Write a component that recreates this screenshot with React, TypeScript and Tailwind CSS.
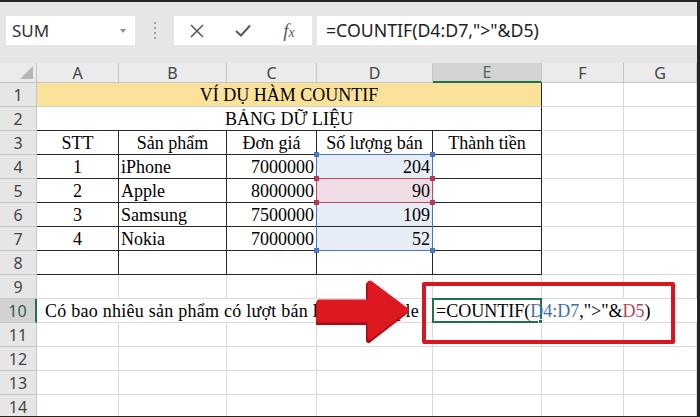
import React from 'react';

const SERIF = "font-['Liberation_Serif','Times_New_Roman',serif] text-[18px] text-black leading-none";
const SANS = "font-['Noto_Sans','Open_Sans',sans-serif]";

const GC = 'border-r border-b border-[#dadada] bg-white';
const KC = 'border-r border-b border-[#262626] bg-white';
const RH = "border-r border-b border-[#c6c6c6] bg-[#e6e6e6] flex items-center justify-center text-[16px] text-[#444] font-['Noto_Sans','Open_Sans',sans-serif]";

function RowHead({ n, active = false }: { n: number; active?: boolean }) {
  if (active) {
    return (
      <div className="border-b border-[#c6c6c6] border-r-2 border-r-[#217346] bg-[#d2d2d2] flex items-center justify-center text-[16px] text-[#2f5e40] font-['Noto_Sans','Open_Sans',sans-serif]">
        {n}
      </div>
    );
  }
  return <div className={RH}>{n}</div>;
}

function Toolbar() {
  return (
    <div className="h-[61px] shrink-0 bg-[#e6e6e6] flex items-start pt-[14px] pl-[6px]">
      <div className="w-[129px] h-[29px] bg-white flex items-center justify-between pl-[6px] pr-[9px]">
        <span className={`${SANS} text-[17px] text-[#333]`}>SUM</span>
        <svg width="6" height="4" viewBox="0 0 6 4">
          <path d="M0 0 L6 0 L3 4 Z" fill="#8a8a8a" />
        </svg>
      </div>
      <div className="w-[39px] h-[29px] flex flex-col items-center justify-center gap-[3px]">
        <div className="w-[2px] h-[2px] bg-[#a0a0a0]" />
        <div className="w-[2px] h-[2px] bg-[#a0a0a0]" />
        <div className="w-[2px] h-[2px] bg-[#a0a0a0]" />
        <div className="w-[2px] h-[2px] bg-[#a0a0a0]" />
      </div>
      <div className="w-[138px] h-[29px] bg-white flex items-center">
        <div className="w-[46px] flex justify-center">
          <svg width="14" height="14" viewBox="0 0 14 14">
            <path d="M1 1 L13 13 M13 1 L1 13" stroke="#5a5a5a" strokeWidth="1.6" fill="none" />
          </svg>
        </div>
        <div className="w-[46px] flex justify-center">
          <svg width="16" height="13" viewBox="0 0 16 13">
            <path d="M1 7 L6 11.5 L15 1.5" stroke="#5a5a5a" strokeWidth="2" fill="none" />
          </svg>
        </div>
        <div className="w-[46px] flex justify-center">
          <span className="font-['Liberation_Serif',serif] italic text-[19px] text-[#5a5a5a] leading-none">
            f<span className="text-[14px]">x</span>
          </span>
        </div>
      </div>
      <div className="ml-[5px] flex-1 h-[29px] bg-white flex items-center pl-[9px]">
        <span className={`${SANS} text-[17.7px] text-[#222]`}>=COUNTIF(D4:D7,"&gt;"&amp;D5)</span>
      </div>
    </div>
  );
}

function ColHead({ l, active = false }: { l: string; active?: boolean }) {
  if (active) {
    return (
      <div className="border-r border-[#c6c6c6] border-b-2 border-b-[#217346] bg-[#d4d4d4] flex items-center justify-center text-[16px] text-[#4c6a55] font-['Noto_Sans','Open_Sans',sans-serif]">
        {l}
      </div>
    );
  }
  return (
    <div className="border-r border-b border-[#c6c6c6] bg-[#ebebeb] flex items-center justify-center text-[16px] text-[#444] font-['Noto_Sans','Open_Sans',sans-serif]">
      {l}
    </div>
  );
}

const data = [
  ['1', 'iPhone', '7000000', '204'],
  ['2', 'Apple', '8000000', '90'],
  ['3', 'Samsung', '7500000', '109'],
  ['4', 'Nokia', '7000000', '52'],
];

function Sheet() {
  return (
    <div className="relative grid grid-cols-[37px_82px_108px_90px_116px_109px_82px_73px] grid-rows-[20px_repeat(14,24px)]">
      {/* header */}
      <div className="border-r border-b border-[#c6c6c6] bg-[#ebebeb] flex items-end justify-end p-[3px]">
        <svg width="13" height="13" viewBox="0 0 13 13">
          <path d="M13 0 L13 13 L0 13 Z" fill="#b5b5b5" />
        </svg>
      </div>
      <ColHead l="A" />
      <ColHead l="B" />
      <ColHead l="C" />
      <ColHead l="D" />
      <ColHead l="E" active />
      <ColHead l="F" />
      <ColHead l="G" />

      {/* row 1 */}
      <RowHead n={1} />
      <div className={`col-span-5 border-r border-r-[#262626] border-b border-b-[#d0d0d0] bg-[#fbe29b] flex items-center justify-center ${SERIF}`}>
        VÍ DỤ HÀM COUNTIF
      </div>
      <div className={GC} />
      <div className={GC} />

      {/* row 2 */}
      <RowHead n={2} />
      <div className={`col-span-5 ${KC} flex items-center justify-center ${SERIF}`}>BẢNG DỮ LIỆU</div>
      <div className={GC} />
      <div className={GC} />

      {/* row 3 */}
      <RowHead n={3} />
      <div className={`${KC} flex items-center justify-center ${SERIF}`}>STT</div>
      <div className={`${KC} flex items-center justify-center ${SERIF}`}>Sản phẩm</div>
      <div className={`${KC} flex items-center justify-center ${SERIF}`}>Đơn giá</div>
      <div className={`${KC} flex items-center justify-center ${SERIF}`}>Số lượng bán</div>
      <div className={`${KC} flex items-center justify-center ${SERIF}`}>Thành tiền</div>
      <div className={GC} />
      <div className={GC} />

      {data.map((r, i) => (
        <React.Fragment key={r[0]}>
          <RowHead n={4 + i} />
          <div className={`${KC} flex items-center justify-center ${SERIF}`}>{r[0]}</div>
          <div className={`${KC} flex items-center pl-[2px] ${SERIF}`}>{r[1]}</div>
          <div className={`${KC} flex items-center justify-end pr-[2px] ${SERIF}`}>{r[2]}</div>
          <div
            className={`border-r border-b border-[#262626] ${i === 1 ? 'bg-[#efdde5]' : 'bg-[#e7edf7]'} flex items-center justify-end pr-[2px] ${SERIF}`}
          >
            {r[3]}
          </div>
          <div className={KC} />
          <div className={GC} />
          <div className={GC} />
        </React.Fragment>
      ))}

      {/* row 8 */}
      <RowHead n={8} />
      <div className={KC} />
      <div className={KC} />
      <div className={KC} />
      <div className={KC} />
      <div className={KC} />
      <div className={GC} />
      <div className={GC} />

      {/* row 9 */}
      <RowHead n={9} />
      {[0, 1, 2, 3, 4, 5, 6].map((k) => (
        <div key={k} className={GC} />
      ))}

      {/* row 10 */}
      <RowHead n={10} active />
      <div className={`col-span-4 border-b border-[#dadada] bg-white overflow-hidden whitespace-nowrap flex items-center pl-[8px] tracking-[0.25px] ${SERIF}`}>
        Có bao nhiêu sản phẩm có lượt bán lớn hơn Apple
      </div>
      <div className="relative z-10 border-b border-[#dadada] bg-white flex items-center whitespace-nowrap pl-[3px]">
        <div className="absolute -left-px -top-px w-[110px] h-[25px] border-2 border-[#217346]">
          <div className="absolute -right-[3px] -bottom-[3px] w-[5px] h-[5px] bg-[#217346] border border-white" />
        </div>
        <span className={`relative ${SERIF}`}>
          =COUNTIF(<span className="text-[#3f6db5]">D4:D7</span>,"&gt;"&amp;<span className="text-[#b2475a]">D5</span>)
        </span>
      </div>
      <div className="border-b border-[#dadada] bg-white" />
      <div className="border-b border-[#dadada] bg-white" />

      {[11, 12, 13, 14].map((n) => (
        <React.Fragment key={n}>
          <RowHead n={n} />
          {[0, 1, 2, 3, 4, 5, 6].map((k) => (
            <div key={k} className={GC} />
          ))}
        </React.Fragment>
      ))}

      {/* selection overlays */}
      <div className="absolute left-[316px] top-[91px] w-[117px] h-[97px] border border-[#4a74c4]">
        <div className="absolute -left-[3px] -top-[3px] w-[5px] h-[5px] bg-[#4a74c4]" />
        <div className="absolute -right-[3px] -top-[3px] w-[5px] h-[5px] bg-[#4a74c4]" />
        <div className="absolute -left-[3px] -bottom-[3px] w-[5px] h-[5px] bg-[#4a74c4]" />
        <div className="absolute -right-[3px] -bottom-[3px] w-[5px] h-[5px] bg-[#4a74c4]" />
      </div>
      <div className="absolute left-[316px] top-[115px] w-[117px] h-[25px] border border-[#c2475d]">
        <div className="absolute -left-[3px] -top-[3px] w-[5px] h-[5px] bg-[#b23a52]" />
        <div className="absolute -right-[3px] -top-[3px] w-[5px] h-[5px] bg-[#b23a52]" />
        <div className="absolute -left-[3px] -bottom-[3px] w-[5px] h-[5px] bg-[#b23a52]" />
        <div className="absolute -right-[3px] -bottom-[3px] w-[5px] h-[5px] bg-[#b23a52]" />
      </div>
    </div>
  );
}

export default function App() {
  return (
    <div className="w-[700px] h-[417px] overflow-hidden bg-[#262626] pt-[2px] pr-[3px] pb-[1px]">
      <div className="relative w-full h-full bg-white flex flex-col overflow-hidden">
        <Toolbar />
        <Sheet />
        {/* red annotation rectangle */}
        <div className="absolute left-[422px] top-[280px] w-[253px] h-[62px] border-[4px] border-[#d8161f] rounded-[2px] z-20" />
        {/* red arrow */}
        <svg className="absolute left-[316px] top-[274px] z-20" width="96" height="68" viewBox="0 0 96 68">
          <path
            d="M3 27 L54 27 L54 7 L90 35 L54 63 L54 45 L3 45 Z"
            fill="#a30d13"
            stroke="#a30d13"
            strokeWidth="5"
            strokeLinejoin="round"
            transform="translate(-1.5 1.5)"
          />
          <path
            d="M3 26 L54 26 L54 7 L90 34 L54 61 L54 44 L3 44 Z"
            fill="#dc1820"
            stroke="#dc1820"
            strokeWidth="5"
            strokeLinejoin="round"
          />
        </svg>
      </div>
    </div>
  );
}
